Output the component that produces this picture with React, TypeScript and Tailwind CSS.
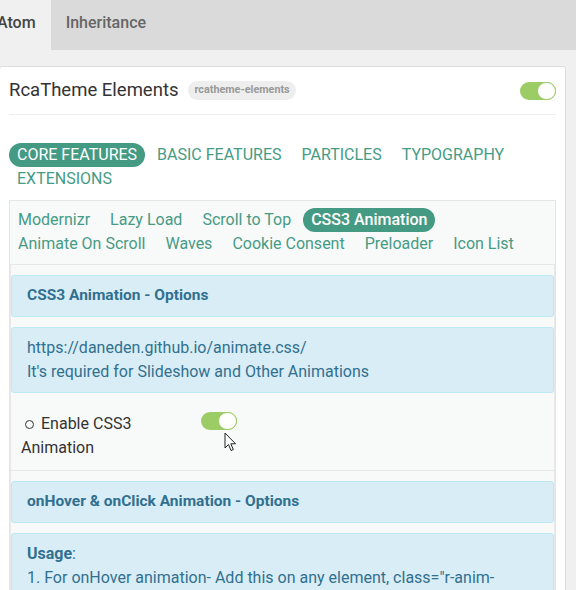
import React from "react";

function Toggle() {
  return (
    <div className="relative w-[36px] h-[18px] rounded-full bg-[#9ccc65] shrink-0">
      <div className="absolute right-0 top-0 w-[19px] h-[18px] rounded-full bg-white border border-[#9ccc65]" />
    </div>
  );
}

const mainNav = ["CORE FEATURES", "BASIC FEATURES", "PARTICLES", "TYPOGRAPHY", "EXTENSIONS"];
const subNav = [
  "Modernizr",
  "Lazy Load",
  "Scroll to Top",
  "CSS3 Animation",
  "Animate On Scroll",
  "Waves",
  "Cookie Consent",
  "Preloader",
  "Icon List",
];

export default function App() {
  return (
    <div className="w-[576px] h-[590px] overflow-hidden bg-[#eff0ef] font-['Roboto',sans-serif] text-[#333]">
      <div className="h-[50px] bg-[#dadada] flex">
        <div className="ml-[-18px] flex">
          <div className="bg-[#eff0ef] px-[15px] pb-[4px] flex items-center text-[16px] font-medium text-[#444]">Atom</div>
          <div className="px-[15px] pb-[4px] flex items-center text-[16px] font-medium text-[#666]">Inheritance</div>
        </div>
      </div>
      <div className="mt-[16px] ml-[-1px] w-[567px] bg-white border border-[#ddd] rounded-[3px] px-[9px] pb-[20px]">
        <div className="h-[48px] flex items-center border-b border-[#eee]">
          <span className="text-[18.5px] leading-none">RcaTheme Elements</span>
          <span className="ml-[10px] text-[10.8px] font-bold text-[#999] bg-[#eee] rounded-full px-[6px] h-[19px] flex items-center">
            rcatheme-elements
          </span>
          <div className="ml-auto">
            <Toggle />
          </div>
        </div>
        <div className="mt-[28px] flex flex-wrap">
          {mainNav.map((n, i) => (
            <span
              key={n}
              className={
                i === 0
                  ? "h-[24px] leading-[24px] px-[8px] mr-[4px] rounded-full bg-[#459a84] text-white text-[16px]"
                  : "h-[24px] leading-[24px] px-[8px] mr-[4px] text-[#469b85] text-[16px]"
              }
            >
              {n}
            </span>
          ))}
        </div>
        <div className="mt-[9px] border border-[#e5e5e5] bg-[#f8f9f9]">
          <div className="pt-[7px] pb-[8px] flex flex-wrap">
            {subNav.map((n) => (
              <span
                key={n}
                className={
                  n === "CSS3 Animation"
                    ? "h-[24px] leading-[24px] px-[8px] mr-[4px] rounded-full bg-[#459a84] text-white text-[16px] font-medium"
                    : "h-[24px] leading-[24px] px-[8px] mr-[4px] text-[#469b85] text-[16px]"
                }
              >
                {n}
              </span>
            ))}
          </div>
          <div className="border border-[#e8e8e8] bg-[#f8f9f9] pt-[10px] h-[400px]">
            <div className="h-[42px] bg-[#d9edf7] border border-[#bce8f1] rounded-[3px] px-[15px] flex items-center text-[15.5px] font-bold text-[#31708f]">
              CSS3 Animation - Options
            </div>
            <div className="mt-[10px] bg-[#d9edf7] border border-[#bce8f1] rounded-[3px] px-[15px] py-[8px] text-[16px] leading-[24px] text-[#31708f]">
              <div>https://daneden.github.io/animate.css/</div>
              <div>It's required for Slideshow and Other Animations</div>
            </div>
            <div className="flex pt-[19px] pb-[10px] border-b border-[#e8e8e8]">
              <div className="w-[190px] pl-[10px] pr-[40px] text-[16px] leading-[24px]">
                <span className="inline-block w-[9px] h-[9px] rounded-full border-[1.5px] border-[#333] ml-[4px] mr-[7px] align-[0px]" />
                Enable CSS3 Animation
              </div>
              <div className="relative">
                <Toggle />
                <svg
                  className="absolute left-[23px] top-[20px]"
                  width="14"
                  height="22"
                  viewBox="0 0 14 22"
                >
                  <path
                    d="M1 1 L1 16 L4.5 12.5 L7 18.5 L9.3 17.5 L6.8 11.8 L11.5 11.8 Z"
                    fill="white"
                    stroke="#222"
                    strokeWidth="1"
                    strokeLinejoin="round"
                  />
                </svg>
              </div>
            </div>
            <div className="mt-[10px] h-[42px] bg-[#d9edf7] border border-[#bce8f1] rounded-[3px] px-[15px] flex items-center text-[15.5px] font-bold text-[#31708f]">
              onHover &amp; onClick Animation - Options
            </div>
            <div className="mt-[10px] bg-[#d9edf7] border border-[#bce8f1] rounded-[3px] px-[15px] py-[8px] text-[16px] leading-[24px] text-[#31708f]">
              <div>
                <span className="font-bold">Usage</span>:
              </div>
              <div>1. For onHover animation- Add this on any element, class="r-anim-hover"</div>
            </div>
          </div>
        </div>
      </div>
    </div>
  );
}
